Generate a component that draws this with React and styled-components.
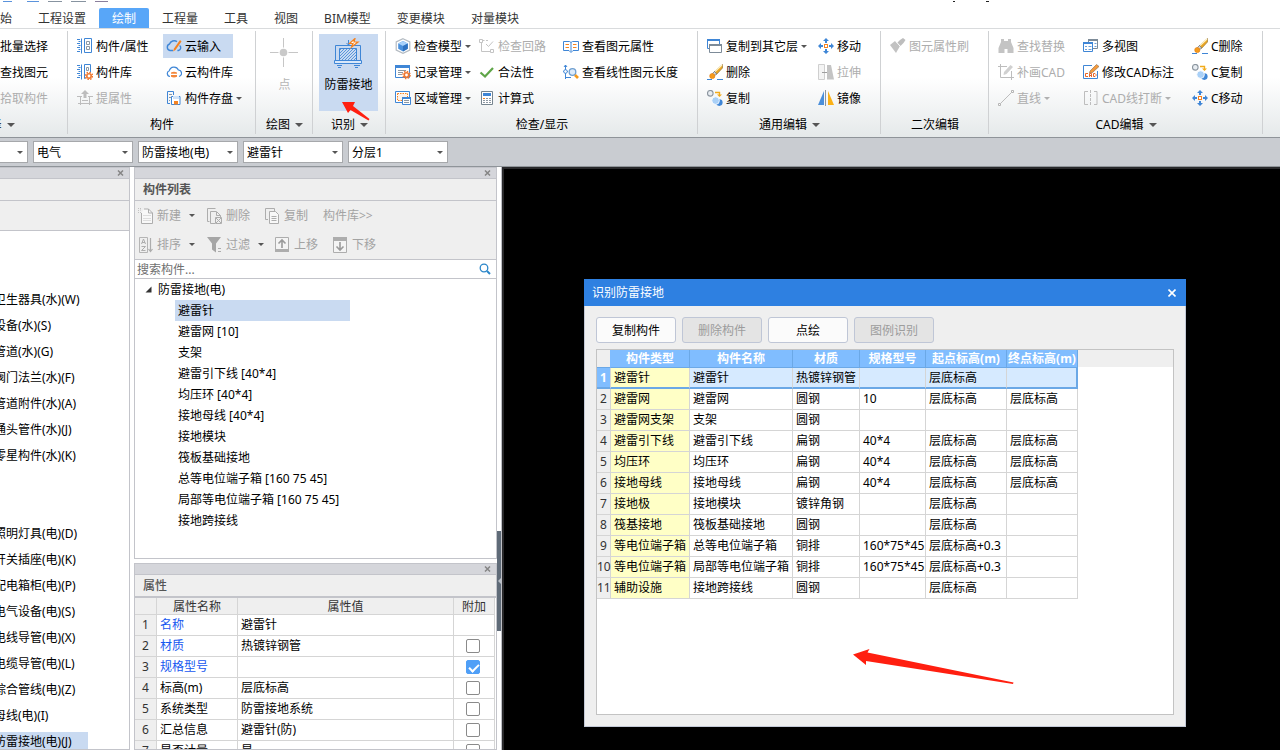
import React from 'react';
import styled, { createGlobalStyle, css } from 'styled-components';

const GlobalStyle = createGlobalStyle`
  * {
    box-sizing: border-box;
  }

  body {
    margin: 0;
    background: #fff;
    color: #000;
    font: 12px/20px "Noto Sans", "Noto Sans CJK SC", sans-serif;
  }

  button, input, select {
    font: inherit;
    color: inherit;
    margin: 0;
  }

  ul {
    margin: 0;
    padding: 0;
    list-style: none;
  }
`;

const BLUE = '#3f86d6';
const ORANGE = '#f58220';
const GRAY = '#bdbdbd';

/* ---------- icons ---------- */

const Gear = ({ cx, cy }) => (
  <>
    <circle cx={cx} cy={cy} r="3.6" fill="none" stroke="#f07830" strokeWidth="1.4" strokeDasharray="1.5 1.3" />
    <circle cx={cx} cy={cy} r="2.2" fill="#fff" stroke="#f07830" strokeWidth="1.6" />
  </>
);

const Spiral = () => (
  <path d="M4.5 .5v15M0 1.5h3M0 5.5h3M0 9.5h3M0 13.5h3M1.5 3.5h2M1.5 7.5h2M1.5 11.5h2" stroke={BLUE} fill="none" />
);

const Eraser = () => (
  <>
    <path d="M0 15.5h5M10 15.5h6" stroke={BLUE} />
    <path d="M15.5 .5 7 8l2.5 2.5L15.5 4z" fill="#e9a625" stroke="#8a6a2c" strokeWidth=".6" />
    <path d="M15 1 8 7.5" stroke="#fff3c8" strokeWidth="1.2" />
    <path d="M7.5 7.5 5.5 9.5l2 2.2L9.6 10z" fill="#d7dde5" stroke="#5b6878" strokeWidth=".7" />
    <circle cx="5.3" cy="12" r="2.6" fill="#f59a1b" stroke="#e07c10" strokeWidth=".6" />
  </>
);

const Copies = () => (
  <>
    <circle cx="3.3" cy="3.3" r="2.8" fill="#e8edf2" stroke="#8b959f" strokeWidth="1.1" />
    <path d="M8 2.5h4.5V5" stroke="#f2ab1a" strokeWidth="1.4" fill="none" />
    <path d="M10 4.5h5L12.5 7z" fill="#f2ab1a" />
    <circle cx="12.3" cy="12.6" r="3.3" fill="#3f86d6" />
    <circle cx="8.6" cy="10.6" r="3.8" fill="#a9d0f7" stroke="#fff" strokeWidth=".8" />
  </>
);

const Move = () => (
  <>
    <path d="M8 0l3 3H9v2H7V3H5zM8 16l3-3H9v-2H7v2H5zM0 8l3-3v2h2v2H3v2zM16 8l-3-3v2h-2v2h2v2z" fill={BLUE} />
    <rect x="6.5" y="6.5" width="3" height="3" fill="#fff" stroke={ORANGE} />
  </>
);

const icons = {
  book: (
    <>
      <Spiral />
      <path d="M7.5.5h7v14h-7z" fill="#fff" stroke={BLUE} />
      <path d="M9.5 3.5h3v3h-3zM9.5 8.5h3v3h-3z" fill="none" stroke="#8d98a3" />
    </>
  ),
  library: (
    <>
      <Spiral />
      <path d="M8.5 14.5h-1V.5h6v8" fill="none" stroke={BLUE} />
      <path d="M9.5 3.5h2v3h-2z" fill="none" stroke="#8d98a3" />
      <Gear cx={12} cy={12} />
    </>
  ),
  extract: (
    <>
      <path d="M8 0l4 4H9.5v4h-3V4H4z" fill={GRAY} />
      <path d="M0 6.5h5M11 6.5h5M3.5 6v9M12.5 6v9M1 13.5h14M5 10.5h6" stroke={GRAY} fill="none" />
    </>
  ),
  cloudPen: (
    <>
      <path d="M7 12.5H4A3.4 3.4 0 0 1 3.5 6 5 5 0 0 1 11 3.6" fill="none" stroke={BLUE} strokeWidth="1.4" />
      <path d="M13.6 7.5a2.8 2.8 0 0 1-1.2 5h-1" fill="none" stroke={BLUE} strokeWidth="1.4" />
      <path d="M14 2 8 10.5l-1 3 2.5-1.6L15.5 3.5z" fill={ORANGE} />
    </>
  ),
  cloud: (
    <>
      <path d="M4 12.5A3 3 0 0 1 3.3 6.7 4.8 4.8 0 0 1 12.4 6a3.3 3.3 0 0 1 .6 6.5" fill="none" stroke={BLUE} strokeWidth="1.2" />
      <path d="M5 8.5q3-1.5 6 0v1.3H5zM5 11h6v1.8q-3 1.5-6 0z" fill="#f3863a" />
    </>
  ),
  saveDisk: (
    <>
      <path d="M4 13.5H1.5v-12h6V5" fill="none" stroke={BLUE} />
      <path d="M3 4.5h3M3 7.5h2M3 10.500h1" stroke="#8d98a3" />
      <path d="M5.5 6.5h8.5v8H5.5z" fill="#fff" stroke={BLUE} />
      <path d="M7 6h6v3H7z" fill="#cfe2f7" />
      <path d="M8 11h4v3.500H8z" fill={ORANGE} />
    </>
  ),
  cube: (
    <>
      <path d="M8 .7 14.8 4v8L8 15.3 1.2 12V4z" fill="none" stroke="#b4bbc2" strokeWidth="1.2" />
      <path d="M8 3l4.8 2.4v5.4L8 13.4l-4.8-2.6V5.4z" fill="#4a90dc" />
      <path d="M8 3l4.8 2.4L8 8 3.2 5.4z" fill="#a8d1fa" />
      <path d="M8 8v5.4l4.8-2.6V5.4z" fill="#2f72c0" />
    </>
  ),
  record: (
    <>
      <path d="M.5 1.5h14v12H.5z" fill="#fff" stroke={BLUE} />
      <path d="M0 1h15v3H0z" fill={BLUE} />
      <path d="M3 6.5h8M3 8.5h5M3 10.5h4" stroke="#8d98a3" />
      <Gear cx={11.5} cy={11} />
    </>
  ),
  region: (
    <>
      <path d="M.5 1.5h14v11H.5z" fill="#fff" stroke={BLUE} />
      <path d="M2.5 3.5h10v7h-10z" fill="#fdf3ea" stroke={ORANGE} strokeDasharray="1.5 1" />
      <path d="M7.5 7.5h8v7h-8z" fill="#fff" stroke={BLUE} />
      <path d="M7 7h9v2H7z" fill={BLUE} />
      <path d="M9 10.5h5M9 12.5h5" stroke="#8d98a3" />
    </>
  ),
  loop: (
    <path d="M.5 1.5h3v3h-3zM11.5 11.5h3v3h-3zM3.5 2.5h2M7 2.5h2M2.5 4.500v9h9M7 6l2.5 2.5L14 3.5" fill="none" stroke="#c4c4c4" />
  ),
  check: <path d="M1.5 8.5 6 12.5 14 4" fill="none" stroke="#5fa548" strokeWidth="2.2" />,
  calc: (
    <>
      <path d="M2.5 1.500h11v13h-11z" fill="#fff" stroke="#76858f" />
      <path d="M4 3h8v3H4z" fill="#3f86d6" />
      <path d="M4 8.5h8M4 10.5h8M4 12.5h8" stroke="#8d98a3" strokeDasharray="2 1" />
      <path d="M4 8.500h2" stroke={ORANGE} />
    </>
  ),
  openBook: (
    <>
      <path d="M.5 3.5h6l1.500 1 1.500-1h6v9H10l-2 2-2-2H.5z" fill="#fff" stroke={BLUE} />
      <path d="M8 4.500v9" stroke={BLUE} />
      <path d="M2.500 6.500h3.500M2.500 9.500h3.500M10 6.500h3.500M10 9.500h3.500" stroke={ORANGE} />
    </>
  ),
  lineSearch: (
    <>
      <path d="M2.5 1v14M1 3l1.5-2L4 3M2 13.500h6M0 7.5h5" fill="none" stroke={BLUE} />
      <circle cx="2.5" cy="7.5" r="1.8" fill="#fff" stroke={BLUE} />
      <circle cx="9.5" cy="8" r="3.3" fill="#dcebfa" stroke="#6f9fd0" strokeWidth="1.3" />
      <path d="M12 11l3 3" stroke="#f59a1b" strokeWidth="2.6" />
    </>
  ),
  floors: (
    <>
      <path d="M.5 1.5h12v9H.5z" fill="#fff" stroke={BLUE} />
      <path d="M0 1h13v2H0z" fill={BLUE} />
      <path d="M2.5 6.5h12v8h-12z" fill="#fff" stroke="#7d8b98" />
      <path d="M2 6h13v2H2z" fill="#7d8b98" />
    </>
  ),
  eraser: <Eraser />,
  copies: <Copies />,
  move: <Move />,
  stretch: (
    <>
      <path d="M.5.5h6v15h-6z" fill="#f4f4f4" stroke="#cfcfcf" />
      <path d="M9 1h4l3 14.5H9z" fill="#c4c4c4" />
      <path d="M4 8.5h5" stroke="#9e9e9e" />
    </>
  ),
  mirror: (
    <>
      <path d="M6 1v14H0z" fill="#4b8fda" />
      <path d="M10 1v14h6z" fill="#fbb116" />
      <path d="M7.5 0v16" stroke="#8b959f" />
    </>
  ),
  brush: (
    <>
      <path d="M0 7 5 3l5 5-4 7z" fill="#c2c2c2" />
      <path d="M7 5 10 2l3-2 2.5 2-2 3-3 3z" fill="#bdbdbd" />
      <path d="M6 3.5 10.5 8.5" stroke="#fff" />
    </>
  ),
  binoculars: (
    <path d="M3 1h3v2h4V1h3v3l2.5 6v5h-6v-4h-3v4h-6v-5L3 4z" fill="#c4c4c4" />
  ),
  redraw: (
    <>
      <path d="M9 2.5H2.5v11h11V7M0 2.5h3M2.5 0v3M13.5 12v4M12 13.5h4" fill="none" stroke={GRAY} />
      <path d="M6 8l6.5-7L15 3 8.5 10 5.5 11z" fill="#d0d0d0" />
    </>
  ),
  line: (
    <>
      <path d="M2.5 13.5 13.5 2.5" stroke={GRAY} />
      <path d="M.5 13.5h2v2h-2zM13.5.5h2v2h-2z" fill="#fff" stroke="#b5b5b5" />
    </>
  ),
  multiView: (
    <>
      <path d="M5.5 1.5h9v9h-9z" fill="#fff" stroke="#7d8b98" />
      <path d="M5 1h10v2H5z" fill="#7d8b98" />
      <path d="M.5 4.5h9v9h-9z" fill="#fff" stroke={BLUE} />
      <path d="M0 4h10v2H0z" fill={BLUE} />
      <path d="M2 8.5h2M5.5 8.5h3M2 11.5h2M5.5 11.5h3M11.5 5.5h2M11.5 8.5h2" stroke="#6e9fd6" />
    </>
  ),
  cadEdit: (
    <>
      <path d="M9 1.5H.5v13h14V7" fill="none" stroke={BLUE} />
      <path d="M7 7l6.5-6.5L16 2.5 9.5 8.5l-3 .5z" fill="#f59a3b" stroke="#8a6a4c" strokeWidth=".6" />
      <path d="M5 9.5H2.5v3H5M6.5 13V9.5h2V13M6.5 11.5h2M10.5 9.5v3h1.5l1-1v-1l-1-1z" fill="none" stroke="#e9672a" />
    </>
  ),
  breakLine: (
    <>
      <path d="M5 1.5H1.5v13H5M11 1.5h3v13h-3" fill="none" stroke={GRAY} />
      <path d="M7.5 0v16" stroke={GRAY} strokeDasharray="3 1" />
    </>
  ),
  newDoc: (
    <>
      <path d="M3.5 5v10.5h11V5l-4-4H6M10.5 1v4h4" fill="#f8f8f8" stroke="#adadad" />
      <path d="M0 .5h4M0 4.500h4M.5 0v5M2 2h2M5.5 7.5h7M5.5 10.500h7M5.5 12.5h7" stroke="#c2c2c2" strokeDasharray="1 1" />
    </>
  ),
  deleteDoc: (
    <>
      <path d="M2.5 13.5h-2V.5h8M8 15.5H3.5v-12h6l4 4V9M9.5 4v3.5h4" fill="none" stroke="#adadad" />
      <path d="M8.5 9.5h6v6h-6zM9 10l5 5M14 10l-5 5" fill="none" stroke="#adadad" />
    </>
  ),
  copyDoc: (
    <>
      <path d="M3 11.5H.5V.5h9V3" fill="none" stroke="#adadad" />
      <path d="M4.5 3.5h6l3 3v9h-9z" fill="#f8f8f8" stroke="#adadad" />
      <path d="M6.5 8.500h5M6.5 10.5h5M6.5 12.5h5" stroke="#adadad" />
    </>
  ),
  sort: (
    <>
      <path d="M1.5.5h8v15h-8z" fill="none" stroke="#b5b5b5" />
      <path d="M3.5 7 5.500 2l2 5M4 5.5h3M3.500 9.500h4l-4 4h4" fill="none" stroke="#adadad" />
      <path d="M12.5 1v13M10.5 12l2 2.5 2-2.5" fill="none" stroke="#adadad" strokeWidth="1.2" />
    </>
  ),
  filter: (
    <>
      <path d="M0 0h14L9 6.5v9l-4-3v-6z" fill="#a6a6a6" />
      <path d="M11 11.5h3M11 14.5h3" stroke="#adadad" />
    </>
  ),
  up: (
    <>
      <path d="M.5.5h13v14H.5z" fill="#f4f4f4" stroke="#adadad" />
      <path d="M0 12h14v3H0z" fill="#adadad" />
      <path d="M7 11V3M3.5 6.500 7 3l3.500 3.500" fill="none" stroke="#9a9a9a" strokeWidth="1.6" />
    </>
  ),
  down: (
    <>
      <path d="M.5.5h13v15H.5z" fill="#f4f4f4" stroke="#adadad" />
      <path d="M0 0h14v4H0z" fill="#adadad" />
      <path d="M7 5v8M3.5 9.500 7 13l3.500-3.500" fill="none" stroke="#9a9a9a" strokeWidth="1.6" />
    </>
  ),
  search: (
    <>
      <circle cx="7" cy="7" r="3.8" fill="none" stroke="#2b86c9" strokeWidth="1.3" />
      <path d="M10 10l3 3" stroke="#2b86c9" strokeWidth="2" />
    </>
  ),
};

const Svg = styled.svg`
  display: block;
  flex: none;
`;

const Icon = ({ name }) => (
  <Svg width="16" height="16" viewBox="0 0 16 16" aria-hidden="true">
    {icons[name]}
  </Svg>
);

const PointIcon = () => (
  <Svg width="30" height="30" viewBox="0 0 30 30" aria-hidden="true">
    <path d="M13.5 0v29M0 14.5h28" stroke="#c6c6c6" />
    <circle cx="13.5" cy="14.5" r="5" fill="#fff" />
    <circle cx="13.5" cy="14.5" r="3.8" fill="#c9c9c9" />
  </Svg>
);

const GroundingIcon = () => (
  <Svg width="30" height="30" viewBox="0 0 30 30" aria-hidden="true">
    <defs>
      <pattern id="hatch" width="3" height="3" patternUnits="userSpaceOnUse">
        <path d="M-1 1l2-2M0 3l3-3M2 4l2-2" stroke="#3f86d6" strokeWidth=".8" />
      </pattern>
    </defs>
    <path d="M1.5 22.5v-15h25v15" fill="none" stroke="#3f86d6" />
    <path d="M5.5 10.5h17v12h-17z" fill="url(#hatch)" stroke="#3f86d6" />
    <path d="M.5 22.5h27v3H.5z" fill="#d9e8fa" stroke="#3f86d6" />
    <path d="M3 27.5h5M4 29.5h3M20 27.5h6M21 29.5h3M14.5 2v5M12.5 5l2 2 2-2" fill="none" stroke="#3f86d6" />
    <path d="M21 .5 15.5 5.5H19L17.5 9l6.5-5h-4z" fill="#fff" stroke="#f58220" strokeWidth="1.2" />
  </Svg>
);

const Caret = styled.span`
  flex: none;
  width: 0;
  height: 0;
  border: solid transparent;
  border-width: ${p => (p.$small ? '3px 3px 0' : '4px 4px 0')};
  border-top-color: ${p => (p.$muted ? '#b0b0b0' : '#555')};
`;

/* ---------- window top ---------- */

const Window = styled.div`
  height: 100vh;
  display: flex;
  flex-direction: column;
  overflow: hidden;
`;

const TitleBar = styled.header`
  flex: none;
  height: 8px;
  line-height: 0;
`;

const Tabs = styled.nav`
  flex: none;
  display: flex;
  margin-left: -25px;
  border-bottom: 1px solid #d9dbdd;
`;

const Tab = styled.button`
  height: 20px;
  padding: 2px 13px 0;
  border: 0;
  border-radius: 2px 2px 0 0;
  line-height: 18px;
  white-space: nowrap;
  background: ${p => (p.$active ? '#58a6f8' : 'none')};
  color: ${p => (p.$active ? '#fff' : '#333')};
`;

const Ribbon = styled.div`
  flex: none;
  display: flex;
  margin-left: -76px;
  background: linear-gradient(#fff 45%, #e5e9ea);
  border-bottom: 1px solid #8f9499;
`;

const Group = styled.section`
  flex: none;
  width: ${p => p.$width}px;
  padding: 5px 6px 0;
  position: relative;

  &::after {
    content: '';
    position: absolute;
    right: 0;
    top: 2px;
    bottom: 3px;
    width: 1px;
    background: #cfd1d3;
  }
`;

const GroupBody = styled.div`
  display: grid;
  grid-template-columns: ${p => p.$cols || '1fr'};
  height: 77px;
`;

const Column = styled.div`
  display: flex;
  flex-direction: column;
  align-items: flex-start;
  gap: 2px;
`;

const ToolButton = styled.button`
  display: flex;
  align-items: center;
  gap: 3px;
  height: 24px;
  padding: 0 12px 0 3px;
  border: 0;
  background: ${p => (p.$active ? '#c9daf1' : 'none')};
  white-space: nowrap;

  &:disabled {
    color: #adadad;
  }
`;

const ToolLabel = styled.span`
  padding-top: 2px;
`;

const BigButton = styled.button`
  display: flex;
  flex-direction: column;
  align-items: center;
  gap: 7px;
  padding: 4px 0 0;
  border: 0;
  background: ${p => (p.$active ? '#c9daf1' : 'none')};
  white-space: nowrap;
  position: relative;

  &:disabled {
    color: #b5b5b5;
  }
`;

const GroupLabel = styled.div`
  display: flex;
  align-items: center;
  justify-content: center;
  gap: 5px;
  height: 26px;
  padding-top: 2px;
  white-space: nowrap;
`;

const Annotation = styled.svg`
  position: absolute;
  left: ${p => p.$left}px;
  top: ${p => p.$top}px;
  pointer-events: none;
`;

const Tool = ({ icon, label, disabled, active, menu }) => (
  <ToolButton disabled={disabled} $active={active}>
    <Icon name={icon} />
    <ToolLabel>{label}</ToolLabel>
    {menu && <Caret $small $muted={disabled} />}
  </ToolButton>
);

const tabs = ['开始', '工程设置', '绘制', '工程量', '工具', '视图', 'BIM模型', '变更模块', '对量模块'];

const ToolGroup = ({ width, cols, label, menu, columns, children }) => (
  <Group $width={width}>
    <GroupBody $cols={cols}>
      {children}
      {columns && columns.map((tools, i) => (
        <Column key={i}>
          {tools.map(tool => <Tool key={tool.label} {...tool} />)}
        </Column>
      ))}
    </GroupBody>
    <GroupLabel>
      {label}
      {menu && <Caret />}
    </GroupLabel>
  </Group>
);

const selectTools = [
  [],
  [
    { icon: 'floors', label: '批量选择' },
    { icon: 'binoculars', label: '查找图元' },
    { icon: 'extract', label: '拾取构件', disabled: true },
  ],
];

const componentTools = [
  [
    { icon: 'book', label: '构件/属性' },
    { icon: 'library', label: '构件库' },
    { icon: 'extract', label: '提属性', disabled: true },
  ],
  [
    { icon: 'cloudPen', label: '云输入', active: true },
    { icon: 'cloud', label: '云构件库' },
    { icon: 'saveDisk', label: '构件存盘', menu: true },
  ],
];

const checkTools = [
  [
    { icon: 'cube', label: '检查模型', menu: true },
    { icon: 'record', label: '记录管理', menu: true },
    { icon: 'region', label: '区域管理', menu: true },
  ],
  [
    { icon: 'loop', label: '检查回路', disabled: true },
    { icon: 'check', label: '合法性' },
    { icon: 'calc', label: '计算式' },
  ],
  [
    { icon: 'openBook', label: '查看图元属性' },
    { icon: 'lineSearch', label: '查看线性图元长度' },
  ],
];

const editTools = [
  [
    { icon: 'floors', label: '复制到其它层', menu: true },
    { icon: 'eraser', label: '删除' },
    { icon: 'copies', label: '复制' },
  ],
  [
    { icon: 'move', label: '移动' },
    { icon: 'stretch', label: '拉伸', disabled: true },
    { icon: 'mirror', label: '镜像' },
  ],
];

const secondEditTools = [
  [{ icon: 'brush', label: '图元属性刷', disabled: true }],
];

const cadTools = [
  [
    { icon: 'binoculars', label: '查找替换', disabled: true },
    { icon: 'redraw', label: '补画CAD', disabled: true },
    { icon: 'line', label: '直线', disabled: true, menu: true },
  ],
  [
    { icon: 'multiView', label: '多视图' },
    { icon: 'cadEdit', label: '修改CAD标注' },
    { icon: 'breakLine', label: 'CAD线打断', disabled: true, menu: true },
  ],
  [
    { icon: 'eraser', label: 'C删除' },
    { icon: 'copies', label: 'C复制' },
    { icon: 'move', label: 'C移动' },
  ],
];

/* ---------- filter bar ---------- */

const FilterBar = styled.div`
  flex: none;
  display: flex;
  gap: 5px;
  margin-left: -72px;
  padding: 3px 0;
  background: #c9ccd1;
  border-bottom: 1px solid #8f9499;
`;

const SelectBox = styled.label`
  position: relative;
  width: 100px;

  select {
    display: block;
    appearance: none;
    width: 100%;
    height: 22px;
    padding: 2px 16px 0 3px;
    border: 1px solid #a6a8ab;
    border-radius: 0;
    background: #fff;
    line-height: 18px;
  }

  ${Caret} {
    position: absolute;
    right: 5px;
    top: 10px;
    pointer-events: none;
  }
`;

const filters = [
  ['楼层', '首层'],
  ['专业', '电气'],
  ['构件类型', '防雷接地(电)'],
  ['构件', '避雷针'],
  ['分层', '分层1'],
];

/* ---------- docked panels ---------- */

const Workspace = styled.main`
  flex: 1;
  min-height: 0;
  display: flex;
`;

const Panel = styled.section`
  display: flex;
  flex-direction: column;
  border: 1px solid #c3c4ca;
  background: #fff;
  flex: ${p => (p.$grow ? '1' : 'none')};
  min-height: 0;
  overflow: hidden;
`;

const DockStrip = styled.div`
  flex: none;
  display: flex;
  justify-content: flex-end;
  height: 11px;
  padding-right: 5px;
  background: #d5d6db;
  border-bottom: 1px solid #c3c4ca;

  button {
    display: flex;
    align-items: center;
    padding: 0;
    border: 0;
    background: none;
  }
`;

const PanelTitle = styled.h2`
  flex: none;
  height: ${p => (p.$thick ? 23 : 22)}px;
  margin: 0;
  padding-left: 8px;
  border-bottom: ${p => (p.$thick ? 2 : 1)}px solid #c3c4ca;
  background: #efefef;
  color: #555;
  font-size: 12px;
  font-weight: ${p => (p.$thick ? 500 : 600)};
  line-height: 21px;
`;

const Strip = ({ label }) => (
  <DockStrip>
    <button aria-label={label}>
      <svg width="7" height="6" viewBox="0 0 7 6">
        <path d="M1 .5l5 5M6 .5l-5 5" stroke="#858585" strokeWidth="1.5" />
      </svg>
    </button>
  </DockStrip>
);

const Sidebar = styled(Panel)`
  width: 150px;
  margin-left: -20px;
`;

const SidebarHead = styled.div`
  flex: none;
  height: ${p => p.$height}px;
  background: #efefef;
  border-bottom: 1px solid #c3c4ca;
`;

const NavList = styled.ul`
  padding-top: ${p => p.$space}px;
`;

const NavItem = styled.li`
  padding: 3px 41px 3px 0;

  a {
    display: block;
    height: 20px;
    padding-left: 13px;
    line-height: 20px;
    color: inherit;
    text-decoration: none;
    white-space: nowrap;
    background: ${p => (p.$active ? '#c9daf1' : 'none')};
  }
`;

const waterItems = ['卫生器具(水)(W)', '设备(水)(S)', '管道(水)(G)', '阀门法兰(水)(F)', '管道附件(水)(A)', '通头管件(水)(J)', '零星构件(水)(K)'];
const powerItems = ['照明灯具(电)(D)', '开关插座(电)(K)', '配电箱柜(电)(P)', '电气设备(电)(S)', '电线导管(电)(X)', '电缆导管(电)(L)', '综合管线(电)(Z)', '母线(电)(I)', '防雷接地(电)(J)'];

const Dock = styled.div`
  flex: none;
  width: 363px;
  margin-left: 4px;
  display: flex;
  flex-direction: column;
  gap: 4px;
`;

const ListToolbar = styled.div`
  padding-left: 3px;
  background: #efefef;
  border-bottom: 1px solid #c3c4ca;
`;

const ToolbarRow = styled.div`
  display: grid;
  grid-template-columns: ${p => p.$cols};
  height: 29px;
`;

const FlatButton = styled.button`
  display: flex;
  align-items: center;
  gap: 3px;
  padding: 0;
  border: 0;
  background: none;
  white-space: nowrap;

  &:disabled {
    color: #a3a3a3;
  }

  ${Caret} {
    margin-left: 5px;
  }
`;

const SearchRow = styled.label`
  display: flex;
  align-items: center;
  height: 19px;
  padding: 0 3px 0 2px;
  border-bottom: 1px solid #c3c4ca;

  input {
    flex: 1;
    height: 18px;
    padding: 2px 0 0;
    border: 0;
    outline: none;
    background: none;
  }

  input::placeholder {
    color: #6f6f6f;
    opacity: 1;
  }
`;

const Tree = styled.div`
  padding-bottom: 27px;

  ul {
    width: max-content;
    margin-left: 40px;
  }

  li {
    height: 21px;
    padding: 0 11px 0 3px;
    line-height: 21px;
  }
`;

const TreeRoot = styled.div`
  display: flex;
  align-items: center;
  gap: 6px;
  height: 21px;
  padding-left: 10px;
`;

const TreeItem = styled.li`
  background: ${p => (p.$active ? '#c9daf1' : 'none')};
`;

const treeItems = [
  '避雷针',
  '避雷网 [10]',
  '支架',
  '避雷引下线 [40*4]',
  '均压环 [40*4]',
  '接地母线 [40*4]',
  '接地模块',
  '筏板基础接地',
  '总等电位端子箱 [160 75 45]',
  '局部等电位端子箱 [160 75 45]',
  '接地跨接线',
];

/* ---------- grids ---------- */

const Grid = styled.table`
  table-layout: fixed;
  border-collapse: separate;
  border-spacing: 0;
  width: ${p => p.$width}px;

  th, td {
    height: 21px;
    padding: 0 3px;
    border: solid #d5d5d5;
    border-width: 0 1px 1px 0;
    font-weight: normal;
    line-height: 18px;
    text-align: left;
    white-space: nowrap;
  }
`;

const PropertyGrid = styled(Grid)`
  thead th {
    height: 17px;
    padding: 1px 0 0;
    background: #efefef;
    color: #333;
    line-height: 15px;
    text-align: center;
  }

  tbody th {
    padding: 0;
    background: #efefef;
    color: #333;
    text-align: center;
  }

  td:last-child {
    padding: 0 4px 0 2px;
    text-align: center;
  }
`;

const NameCell = styled.td`
  color: ${p => (p.$link ? '#1657f0' : '#000')};
`;

const CheckBox = styled.input.attrs({ type: 'checkbox' })`
  appearance: none;
  position: relative;
  display: block;
  width: 14px;
  height: 14px;
  margin: 0 auto;
  border: 1px solid #8a8a8a;
  border-radius: 2px;
  background: #fff;

  &:checked {
    border-color: #4f9ff7;
    background: #4f9ff7;
  }

  &:checked::after {
    content: '';
    position: absolute;
    left: 4px;
    top: 1px;
    width: 4px;
    height: 8px;
    border: solid #fff;
    border-width: 0 2px 2px 0;
    transform: rotate(45deg);
  }
`;

const properties = [
  { name: '名称', value: '避雷针', link: true },
  { name: '材质', value: '热镀锌钢管', link: true, extra: false },
  { name: '规格型号', value: '', link: true, extra: true },
  { name: '标高(m)', value: '层底标高', extra: false },
  { name: '系统类型', value: '防雷接地系统', extra: false },
  { name: '汇总信息', value: '避雷针(防)', extra: false },
  { name: '是否计量', value: '是', extra: false },
];

/* ---------- drawing area ---------- */

const Splitter = styled.div`
  flex: none;
  width: 5px;
  padding-top: 364px;
  border-right: 1px solid #bfc0c6;
`;

const SplitterHandle = styled.button`
  display: flex;
  align-items: center;
  justify-content: flex-end;
  width: 4px;
  height: 100px;
  padding: 0;
  border: 0;
  background: #5f6b78;
`;

const Canvas = styled.div`
  flex: 1;
  position: relative;
  border: solid #29292b;
  border-width: 2px 0 0 2px;
  background: #000;
`;

/* floating window placed freely over the drawing area */
const Dialog = styled.section`
  position: absolute;
  left: 80px;
  top: 110px;
  width: 602px;
  height: 448px;
  display: flex;
  flex-direction: column;
  border: 1px solid #c3c9d6;
  border-top: 0;
  background: #efefef;
`;

const DialogTitle = styled.div`
  display: flex;
  align-items: center;
  justify-content: space-between;
  height: 27px;
  margin: 0 -1px;
  padding: 0 10px 0 8px;
  background: #2e80e1;
  color: #fff;

  h2 {
    margin: 0;
    font-size: 12px;
    font-weight: normal;
  }

  button {
    display: flex;
    padding: 0;
    border: 0;
    background: none;
  }
`;

const DialogBody = styled.div`
  flex: 1;
  min-height: 0;
  display: flex;
  flex-direction: column;
  gap: 6px;
  padding: 11px;
`;

const ButtonRow = styled.div`
  display: flex;
  gap: 6px;
`;

const DialogButton = styled.button`
  width: 80px;
  height: 26px;
  padding: 2px 0 0;
  border: 1px solid #bfc6d6;
  border-radius: 3px;
  background: #fbfbfb;

  &:disabled {
    background: #e4e4e4;
    color: #9c9c9c;
  }
`;

const TableFrame = styled.div`
  flex: 1;
  border: 1px solid #c3c3c3;
  background: linear-gradient(#efefef 17px, #fff 17px);
`;

const selectedRow = css`
  && th {
    background: #80bdff;
    color: #fff;
    font-weight: bold;
  }

  td {
    background: #d6eaff;
  }

  && th, && td {
    border-bottom: 2px solid #6ba8e6;
  }

  && td:last-child {
    border-right: 2px solid #6ba8e6;
  }
`;

const RecognizeGrid = styled(Grid)`
  thead th {
    height: 18px;
    padding: 0;
    border-color: #6ba8e6;
    background: #80bdff;
    color: #fff;
    font-weight: bold;
    line-height: 17px;
    text-align: center;
  }

  thead th:first-child {
    border-right-color: #80bdff;
    background: #efefef;
  }

  tbody th {
    padding: 0;
    background: #efefef;
    color: #333;
    text-align: center;
  }

  tbody td {
    line-height: 18px;
  }
`;

const GridRow = styled.tr`
  ${p => p.$selected && selectedRow}

  td:nth-child(2) {
    background: #ffffc6;
  }
`;

const recognizeCols = ['构件类型', '构件名称', '材质', '规格型号', '起点标高(m)', '终点标高(m)'];

const recognizeRows = [
  ['避雷针', '避雷针', '热镀锌钢管', '', '层底标高', ''],
  ['避雷网', '避雷网', '圆钢', '10', '层底标高', '层底标高'],
  ['避雷网支架', '支架', '圆钢', '', '', ''],
  ['避雷引下线', '避雷引下线', '扁钢', '40*4', '层底标高', '层底标高'],
  ['均压环', '均压环', '扁钢', '40*4', '层底标高', '层底标高'],
  ['接地母线', '接地母线', '扁钢', '40*4', '层底标高', '层底标高'],
  ['接地极', '接地模块', '镀锌角钢', '', '层底标高', ''],
  ['筏基接地', '筏板基础接地', '圆钢', '', '层底标高', ''],
  ['等电位端子箱', '总等电位端子箱', '铜排', '160*75*45', '层底标高+0.3', ''],
  ['等电位端子箱', '局部等电位端子箱', '铜排', '160*75*45', '层底标高+0.3', ''],
  ['辅助设施', '接地跨接线', '圆钢', '', '层底标高', ''],
];

const ColGroup = ({ widths }) => (
  <colgroup>
    {widths.map((width, i) => <col key={i} style={{ width }} />)}
  </colgroup>
);

const RecognizeDialog = () => (
  <Dialog aria-label="识别防雷接地">
    <DialogTitle>
      <h2>识别防雷接地</h2>
      <button aria-label="关闭">
        <svg width="8" height="8" viewBox="0 0 8 8">
          <path d="M.5 .5l7 7M7.5 .5l-7 7" stroke="#fff" strokeWidth="1.6" />
        </svg>
      </button>
    </DialogTitle>
    <DialogBody>
      <ButtonRow>
        <DialogButton>复制构件</DialogButton>
        <DialogButton disabled>删除构件</DialogButton>
        <DialogButton>点绘</DialogButton>
        <DialogButton disabled>图例识别</DialogButton>
      </ButtonRow>
      <TableFrame>
        <RecognizeGrid $width={481}>
          <ColGroup widths={[14, 79, 103, 67, 66, 81, 71]} />
          <thead>
            <tr>
              <th />
              {recognizeCols.map(col => <th key={col}>{col}</th>)}
            </tr>
          </thead>
          <tbody>
            {recognizeRows.map((row, i) => (
              <GridRow key={i} $selected={i === 0}>
                <th>{i + 1}</th>
                {row.map((cell, j) => <td key={j}>{cell}</td>)}
              </GridRow>
            ))}
          </tbody>
        </RecognizeGrid>
      </TableFrame>
    </DialogBody>
    <Annotation $left={268} $top={369} width="161" height="37" viewBox="0 0 161 37" aria-hidden="true">
      <path d="M0 6.5 16.5 1l-2 3.5L160.5 34.5l-.5 1.5L13 13v4z" fill="#ff1f10" />
    </Annotation>
  </Dialog>
);

const PropertyPanel = () => (
  <Panel $grow>
    <Strip label="关闭属性" />
    <PanelTitle $thick>属性</PanelTitle>
    <PropertyGrid $width={360}>
      <ColGroup widths={[22, 81, 216, 41]} />
      <thead>
        <tr>
          <th />
          <th>属性名称</th>
          <th>属性值</th>
          <th>附加</th>
        </tr>
      </thead>
      <tbody>
        {properties.map(({ name, value, link, extra }, i) => (
          <tr key={name}>
            <th>{i + 1}</th>
            <NameCell $link={link}>{name}</NameCell>
            <td>{value}</td>
            <td>
              {extra !== undefined && <CheckBox defaultChecked={extra} aria-label={name} />}
            </td>
          </tr>
        ))}
      </tbody>
    </PropertyGrid>
  </Panel>
);

const ComponentPanel = () => (
  <Panel>
    <Strip label="关闭构件列表" />
    <PanelTitle>构件列表</PanelTitle>
    <ListToolbar>
      <ToolbarRow $cols="69px 58px 58px auto">
        <FlatButton disabled><Icon name="newDoc" />新建<Caret $small /></FlatButton>
        <FlatButton disabled><Icon name="deleteDoc" />删除</FlatButton>
        <FlatButton disabled><Icon name="copyDoc" />复制</FlatButton>
        <FlatButton disabled>构件库&gt;&gt;</FlatButton>
      </ToolbarRow>
      <ToolbarRow $cols="69px 68px 58px auto">
        <FlatButton disabled><Icon name="sort" />排序<Caret $small /></FlatButton>
        <FlatButton disabled><Icon name="filter" />过滤<Caret $small /></FlatButton>
        <FlatButton disabled><Icon name="up" />上移</FlatButton>
        <FlatButton disabled><Icon name="down" />下移</FlatButton>
      </ToolbarRow>
    </ListToolbar>
    <SearchRow>
      <input type="text" placeholder="搜索构件..." aria-label="搜索构件" />
      <Icon name="search" />
    </SearchRow>
    <Tree>
      <TreeRoot>
        <svg width="7" height="7" viewBox="0 0 7 7" aria-hidden="true">
          <path d="M6.5 .5v6h-6z" fill="#333" />
        </svg>
        防雷接地(电)
      </TreeRoot>
      <ul>
        {treeItems.map((item, i) => (
          <TreeItem key={item} $active={i === 0}>{item}</TreeItem>
        ))}
      </ul>
    </Tree>
  </Panel>
);

const App = () => (
  <>
    <GlobalStyle />
    <Window>
      <TitleBar>
        <svg width="1000" height="3" viewBox="0 0 1000 3" aria-hidden="true">
          <path d="M3 0h9v1H3zM27 0h12v1H27z" fill="#5b93dc" />
          <path d="M48 0h14v1H48zM71 0h15v1H71z" fill="#8793a0" />
          <path d="M95 0h13v1H95z" fill="#8a7f9c" />
          <path d="M953 0h2v1h-2zM986 0h3v1h-3z" fill="#222" />
        </svg>
      </TitleBar>

      <Tabs>
        {tabs.map(tab => <Tab key={tab} $active={tab === '绘制'}>{tab}</Tab>)}
      </Tabs>

      <Ribbon>
        <ToolGroup width={144} cols="48px auto" label="选择" menu columns={selectTools} />
        <ToolGroup width={188} cols="89px auto" label="构件" columns={componentTools} />
        <ToolGroup width={57} label="绘图" menu>
          <BigButton disabled><PointIcon />点</BigButton>
        </ToolGroup>
        <ToolGroup width={73} cols="59px" label="识别" menu>
          <BigButton $active>
            <GroundingIcon />
            防雷接地
            <Annotation $left={23} $top={67} width="28" height="20" viewBox="0 0 28 20" aria-hidden="true">
              <path d="M0 1h13l-2 4 16.5 13-1 1.5L8.5 9 6 12z" fill="#ff1f10" />
            </Annotation>
          </BigButton>
        </ToolGroup>
        <ToolGroup width={312} cols="84px 84px auto" label="检查/显示" columns={checkTools} />
        <ToolGroup width={183} cols="111px auto" label="通用编辑" menu columns={editTools} />
        <ToolGroup width={108} label="二次编辑" columns={secondEditTools} />
        <ToolGroup width={274} cols="85px 109px auto" label="CAD编辑" menu columns={cadTools} />
      </Ribbon>

      <FilterBar>
        {filters.map(([label, value]) => (
          <SelectBox key={label}>
            <select aria-label={label} defaultValue={value}>
              <option>{value}</option>
            </select>
            <Caret $small />
          </SelectBox>
        ))}
      </FilterBar>

      <Workspace>
        <Sidebar>
          <Strip label="关闭导航" />
          <SidebarHead $height={22} />
          <SidebarHead $height={30} />
          <NavList $space={56}>
            {waterItems.map(item => <NavItem key={item}><a href="#nav">{item}</a></NavItem>)}
          </NavList>
          <NavList $space={52}>
            {powerItems.map((item, i) => (
              <NavItem key={item} $active={i === powerItems.length - 1}><a href="#nav">{item}</a></NavItem>
            ))}
          </NavList>
        </Sidebar>
        <Dock>
          <ComponentPanel />
          <PropertyPanel />
        </Dock>
        <Splitter>
          <SplitterHandle aria-label="折叠面板">
            <svg width="3" height="6" viewBox="0 0 3 6"><path d="M3 0v6L0 3z" fill="#b9c0c8" /></svg>
          </SplitterHandle>
        </Splitter>
        <Canvas>
          <RecognizeDialog />
        </Canvas>
      </Workspace>
    </Window>
  </>
);

export default App;
